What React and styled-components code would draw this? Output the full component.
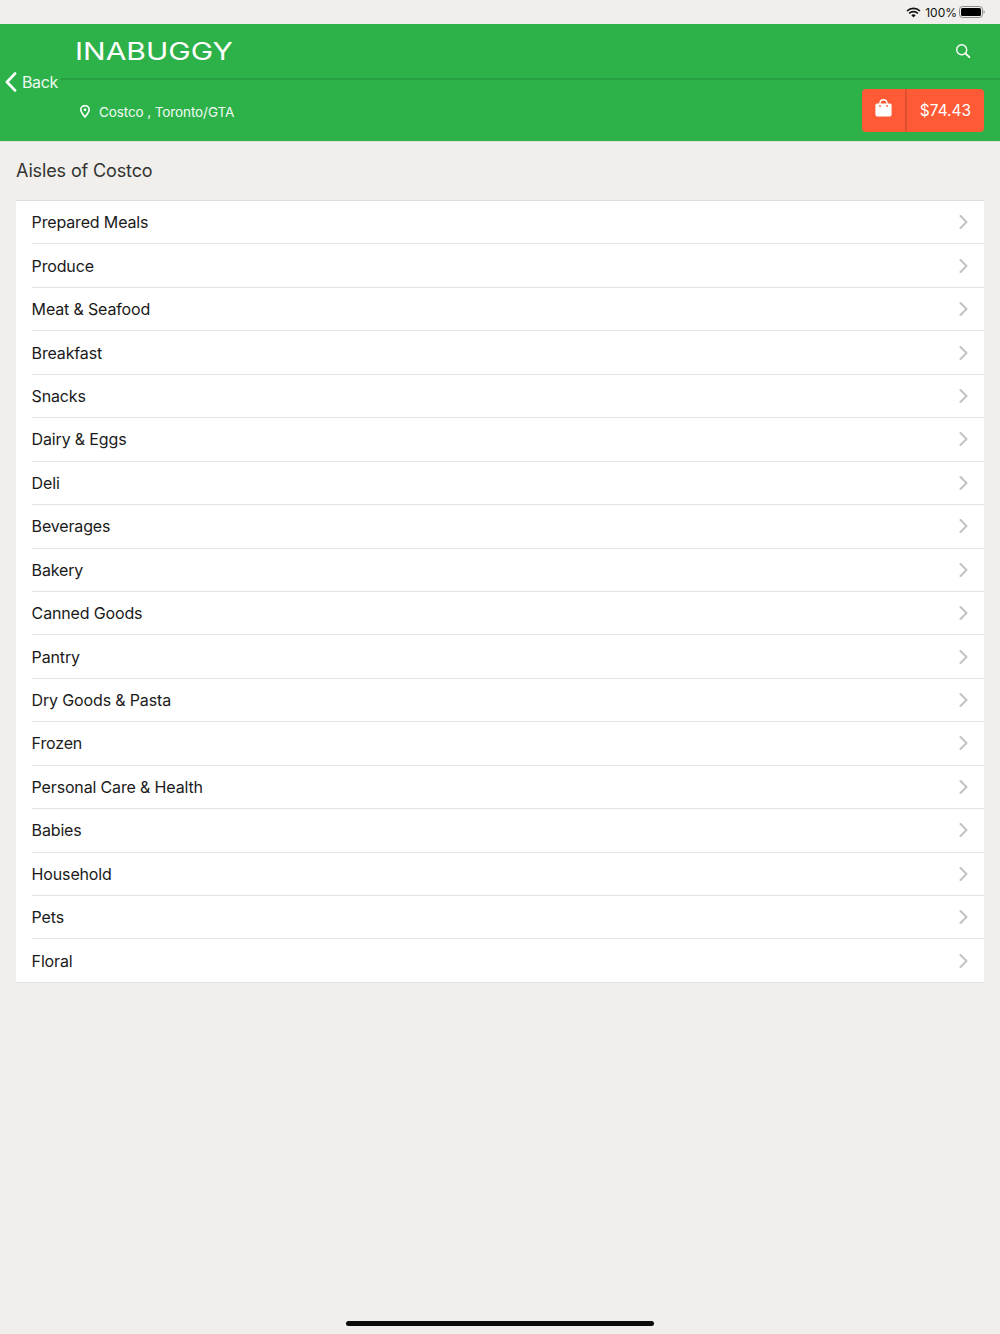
import React from "react";
import styled, { createGlobalStyle } from "styled-components";

const Global = createGlobalStyle`
  html, body { margin: 0; padding: 0; background: #f0efeb; }
  body { font-family: Inter, "Liberation Sans", sans-serif; }
`;
const Page = styled.div`
  width: 1000px; height: 1334px; background: #f0efeb; position: relative; overflow: hidden;
  display: flex; flex-direction: column;
`;
const StatusBar = styled.div`
  height: 24px; display: flex; align-items: center; justify-content: flex-end;
  padding-right: 15px; box-sizing: border-box; color: #111; font-size: 12px;
`;
const StatusText = styled.span`margin: 0 2px 0 4px;`;
const Header = styled.header`
  height: 117px; background: #2db24a; position: relative; display: flex; flex-direction: column;
  color: #fff; border-bottom: 1px solid #dfe6dc; margin-bottom: -1px;
`;
const TopRow = styled.div`
  flex: none; border-bottom: 2px solid #27a042; box-sizing: border-box;
  height: 56px; display: flex; align-items: center; justify-content: space-between;
  padding: 0 29px 0 75px;
`;
const Logo = styled.div`
  font-family: Inter, sans-serif; font-weight: 400; font-size: 24px; line-height: 1;
  transform: scaleX(1.25); transform-origin: left center; margin-top: 2px;
`;
const Back = styled.div`
  position: absolute; left: 0; top: 44px; width: 61px; height: 28px; background: #2db24a;
  display: flex; align-items: center; gap: 5px; padding-left: 5px; box-sizing: border-box;
  font-size: 16px; letter-spacing: -0.4px; color: #eef8f0;
`;
const BottomRow = styled.div`
  flex: 1; display: flex; align-items: center; justify-content: space-between;
  padding: 0 16px 0 80px;
`;
const Location = styled.div`
  display: flex; align-items: center; gap: 9px; font-size: 13.5px; letter-spacing: -0.1px; margin-top: 2px; color: #f2faf4;
`;
const CartButton = styled.div`
  width: 122px; height: 43px; background: #ff5a36; border-radius: 4px; display: flex; margin-top: -1px;
`;
const CartIcon = styled.div`
  width: 43px; flex: none; display: flex; align-items: center; justify-content: center;
  border-right: 2px solid #e04e30; padding-bottom: 4px;
`;
const CartPrice = styled.div`
  flex: 1; display: flex; align-items: center; justify-content: center; font-size: 15.5px; color: #fff; padding-top: 1px;
`;
const Title = styled.h1`
  margin: 0; padding: 0 16px 1px; height: 59px; display: flex; align-items: center; font-weight: 400;
  font-size: 18px; letter-spacing: -0.13px; color: #333; box-sizing: border-box;
`;
const List = styled.ul`
  list-style: none; margin: 0 16px; padding: 0; background: #fff;
  border-top: 1px solid #dfdfdf; border-bottom: 1px solid #dfdfdf;
`;
const Row = styled.li`
  height: 43.44px; box-sizing: border-box; margin-left: 15.6px; padding-right: 16px;
  display: flex; align-items: center; justify-content: space-between;
  font-size: 16px; letter-spacing: -0.15px; color: #1a1a1a;
  &:not(:last-child) { border-bottom: 1px solid #e4e4e4; }
  &:last-child { height: 43px; }
`;
const HomeBar = styled.div`
  position: absolute; left: 346px; top: 1321px; width: 308px; height: 5px; border-radius: 3px; background: #0c0c0c;
`;

const items = ["Prepared Meals","Produce","Meat & Seafood","Breakfast","Snacks","Dairy & Eggs","Deli","Beverages","Bakery","Canned Goods","Pantry","Dry Goods & Pasta","Frozen","Personal Care & Health","Babies","Household","Pets","Floral"];

const Wifi = () => (
  <svg width="15" height="11" viewBox="0 0 15 11" fill="none" stroke="#111" strokeWidth="1.7">
    <path d="M1 4 A9.5 9.5 0 0 1 14 4" />
    <path d="M3.2 6.3 A6.2 6.2 0 0 1 11.8 6.3" />
    <path d="M7.5 10.5 L5.4 8.3 A3 3 0 0 1 9.6 8.3 Z" fill="#111" stroke="none" />
  </svg>
);
const Battery = () => (
  <svg width="26" height="12" viewBox="0 0 26 12">
    <rect x="0.5" y="0.5" width="23" height="11" rx="3" fill="none" stroke="#8a8a88" />
    <rect x="2" y="2" width="20" height="8" rx="1.5" fill="#000" />
    <path d="M24.6 4.2 a2 2 0 0 1 0 3.6 z" fill="#8a8a88" />
  </svg>
);
const Search = () => (
  <svg width="16" height="16" viewBox="0 0 16 16" fill="none" stroke="#fff" strokeWidth="1.4" strokeLinecap="round">
    <circle cx="6.7" cy="6.7" r="5" />
    <path d="M10.4 10.4 L14.4 14.2" strokeWidth="1.8" />
  </svg>
);
const BackChevron = () => (
  <svg width="12" height="20" viewBox="0 0 12 20" fill="none" stroke="#fff" strokeWidth="2.8" strokeLinecap="round" strokeLinejoin="round">
    <path d="M10 1.6 L2 10 L10 18.4" />
  </svg>
);
const Pin = () => (
  <svg width="10" height="13" viewBox="0 0 10 13" fill="none" stroke="#fff" strokeWidth="1.6">
    <path d="M5 12 C3 9.5 0.8 7.2 0.8 4.8 A4.2 4.2 0 0 1 9.2 4.8 C9.2 7.2 7 9.5 5 12 Z" />
    <circle cx="5" cy="4.8" r="1.3" fill="#fff" stroke="none" />
  </svg>
);
const Bag = () => (
  <svg width="17" height="18" viewBox="0 0 17 18">
    <path d="M2 4.6 H15 Q16.6 4.6 16.6 6.2 V15 Q16.6 17.6 14 17.6 H3 Q0.4 17.6 0.4 15 V6.2 Q0.4 4.6 2 4.6 Z" fill="#fff" />
    <path d="M5 7 V3.9 A3.5 3.2 0 0 1 12 3.9 V7" fill="none" stroke="#fff" strokeWidth="1.4" />
    <circle cx="5" cy="7" r="0.9" fill="#ff5a36" />
    <circle cx="12" cy="7" r="0.9" fill="#ff5a36" />
  </svg>
);
const Chevron = () => (
  <svg width="9" height="14" viewBox="0 0 9 14" fill="none" stroke="#c2c2c2" strokeWidth="2" strokeLinecap="round" strokeLinejoin="round">
    <path d="M1.5 1 L7.5 7 L1.5 13" />
  </svg>
);

export default function App() {
  return (
    <Page>
      <Global />
      <StatusBar>
        <Wifi />
        <StatusText>100%</StatusText>
        <Battery />
      </StatusBar>
      <Header>
        <TopRow>
          <Logo>INABUGGY</Logo>
          <Search />
        </TopRow>
        <Back><BackChevron />Back</Back>
        <BottomRow>
          <Location><Pin />Costco , Toronto/GTA</Location>
          <CartButton>
            <CartIcon><Bag /></CartIcon>
            <CartPrice>$74.43</CartPrice>
          </CartButton>
        </BottomRow>
      </Header>
      <Title>Aisles of Costco</Title>
      <List>
        {items.map((t) => (
          <Row key={t}>{t}<Chevron /></Row>
        ))}
      </List>
      <HomeBar />
    </Page>
  );
}
